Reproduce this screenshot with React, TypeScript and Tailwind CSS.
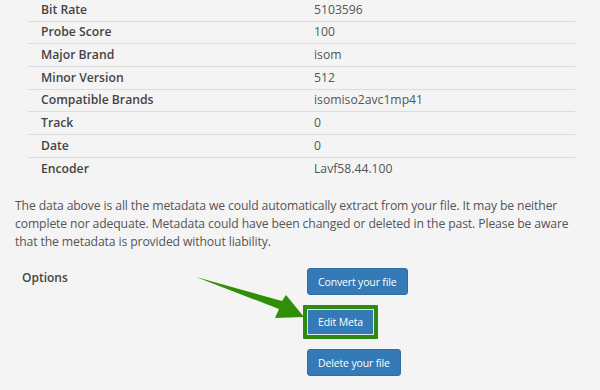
const rows: [string, string][] = [
  ["Bit Rate", "5103596"],
  ["Probe Score", "100"],
  ["Major Brand", "isom"],
  ["Minor Version", "512"],
  ["Compatible Brands", "isomiso2avc1mp41"],
  ["Track", "0"],
  ["Date", "0"],
  ["Encoder", "Lavf58.44.100"],
];

const btn =
  "bg-[#337ab7] text-white text-[10.5px] tracking-[-0.15px] leading-none rounded-[3px] border border-[#2e6da4] h-[27px] px-[10px] flex items-center";

export default function App() {
  return (
    <div
      className="relative w-[600px] h-[390px] overflow-hidden bg-[#f4f4f4] text-[#555]"
      style={{ fontFamily: '"Open Sans", "Liberation Sans", sans-serif' }}
    >
      {/* metadata table */}
      <div className="ml-[28px] w-[547px] mt-[-1px] text-[12.2px]">
        {rows.map(([k, v], i) => (
          <div
            key={k}
            className={
              "flex items-center h-[22.67px] " +
              (i < rows.length - 1 ? "border-b border-[#dcdcdc]" : "")
            }
          >
            <div className="w-[273px] pl-[13px] font-semibold text-[#444]">{k}</div>
            <div className="flex-1 pl-[13px]">{v}</div>
          </div>
        ))}
      </div>

      <p className="mt-[17px] ml-[15px] whitespace-nowrap text-[12.2px] tracking-[-0.12px] leading-[18px]">
        The data above is all the metadata we could automatically extract from your file. It may be neither
        <br />
        complete nor adequate. Metadata could have been changed or deleted in the past. Please be aware
        <br />
        that the metadata is provided without liability.
      </p>

      {/* options */}
      <div className="flex mt-[17px]">
        <div className="w-[307px] pl-[22px] pt-[1px] text-[12px] font-semibold text-[#444]">Options</div>
        <div className="flex flex-col items-start gap-[14px]">
          <button className={btn}>Convert your file</button>
          <div className="-ml-[4px] -my-[4px] border-4 border-[#2f8a10] rounded-[1px]">
            <button className={btn + " !border-[#d6e6f3] !rounded-none !h-[26px]"}>Edit Meta</button>
          </div>
          <button className={btn}>Delete your file</button>
        </div>
      </div>

      {/* green pointer arrow */}
      <svg className="absolute left-0 top-0" width="600" height="390" viewBox="0 0 600 390">
        <polygon points="196,277 282,301 286,295 304,317 275,318 279,309" fill="#2f8f06" />
      </svg>
    </div>
  );
}
